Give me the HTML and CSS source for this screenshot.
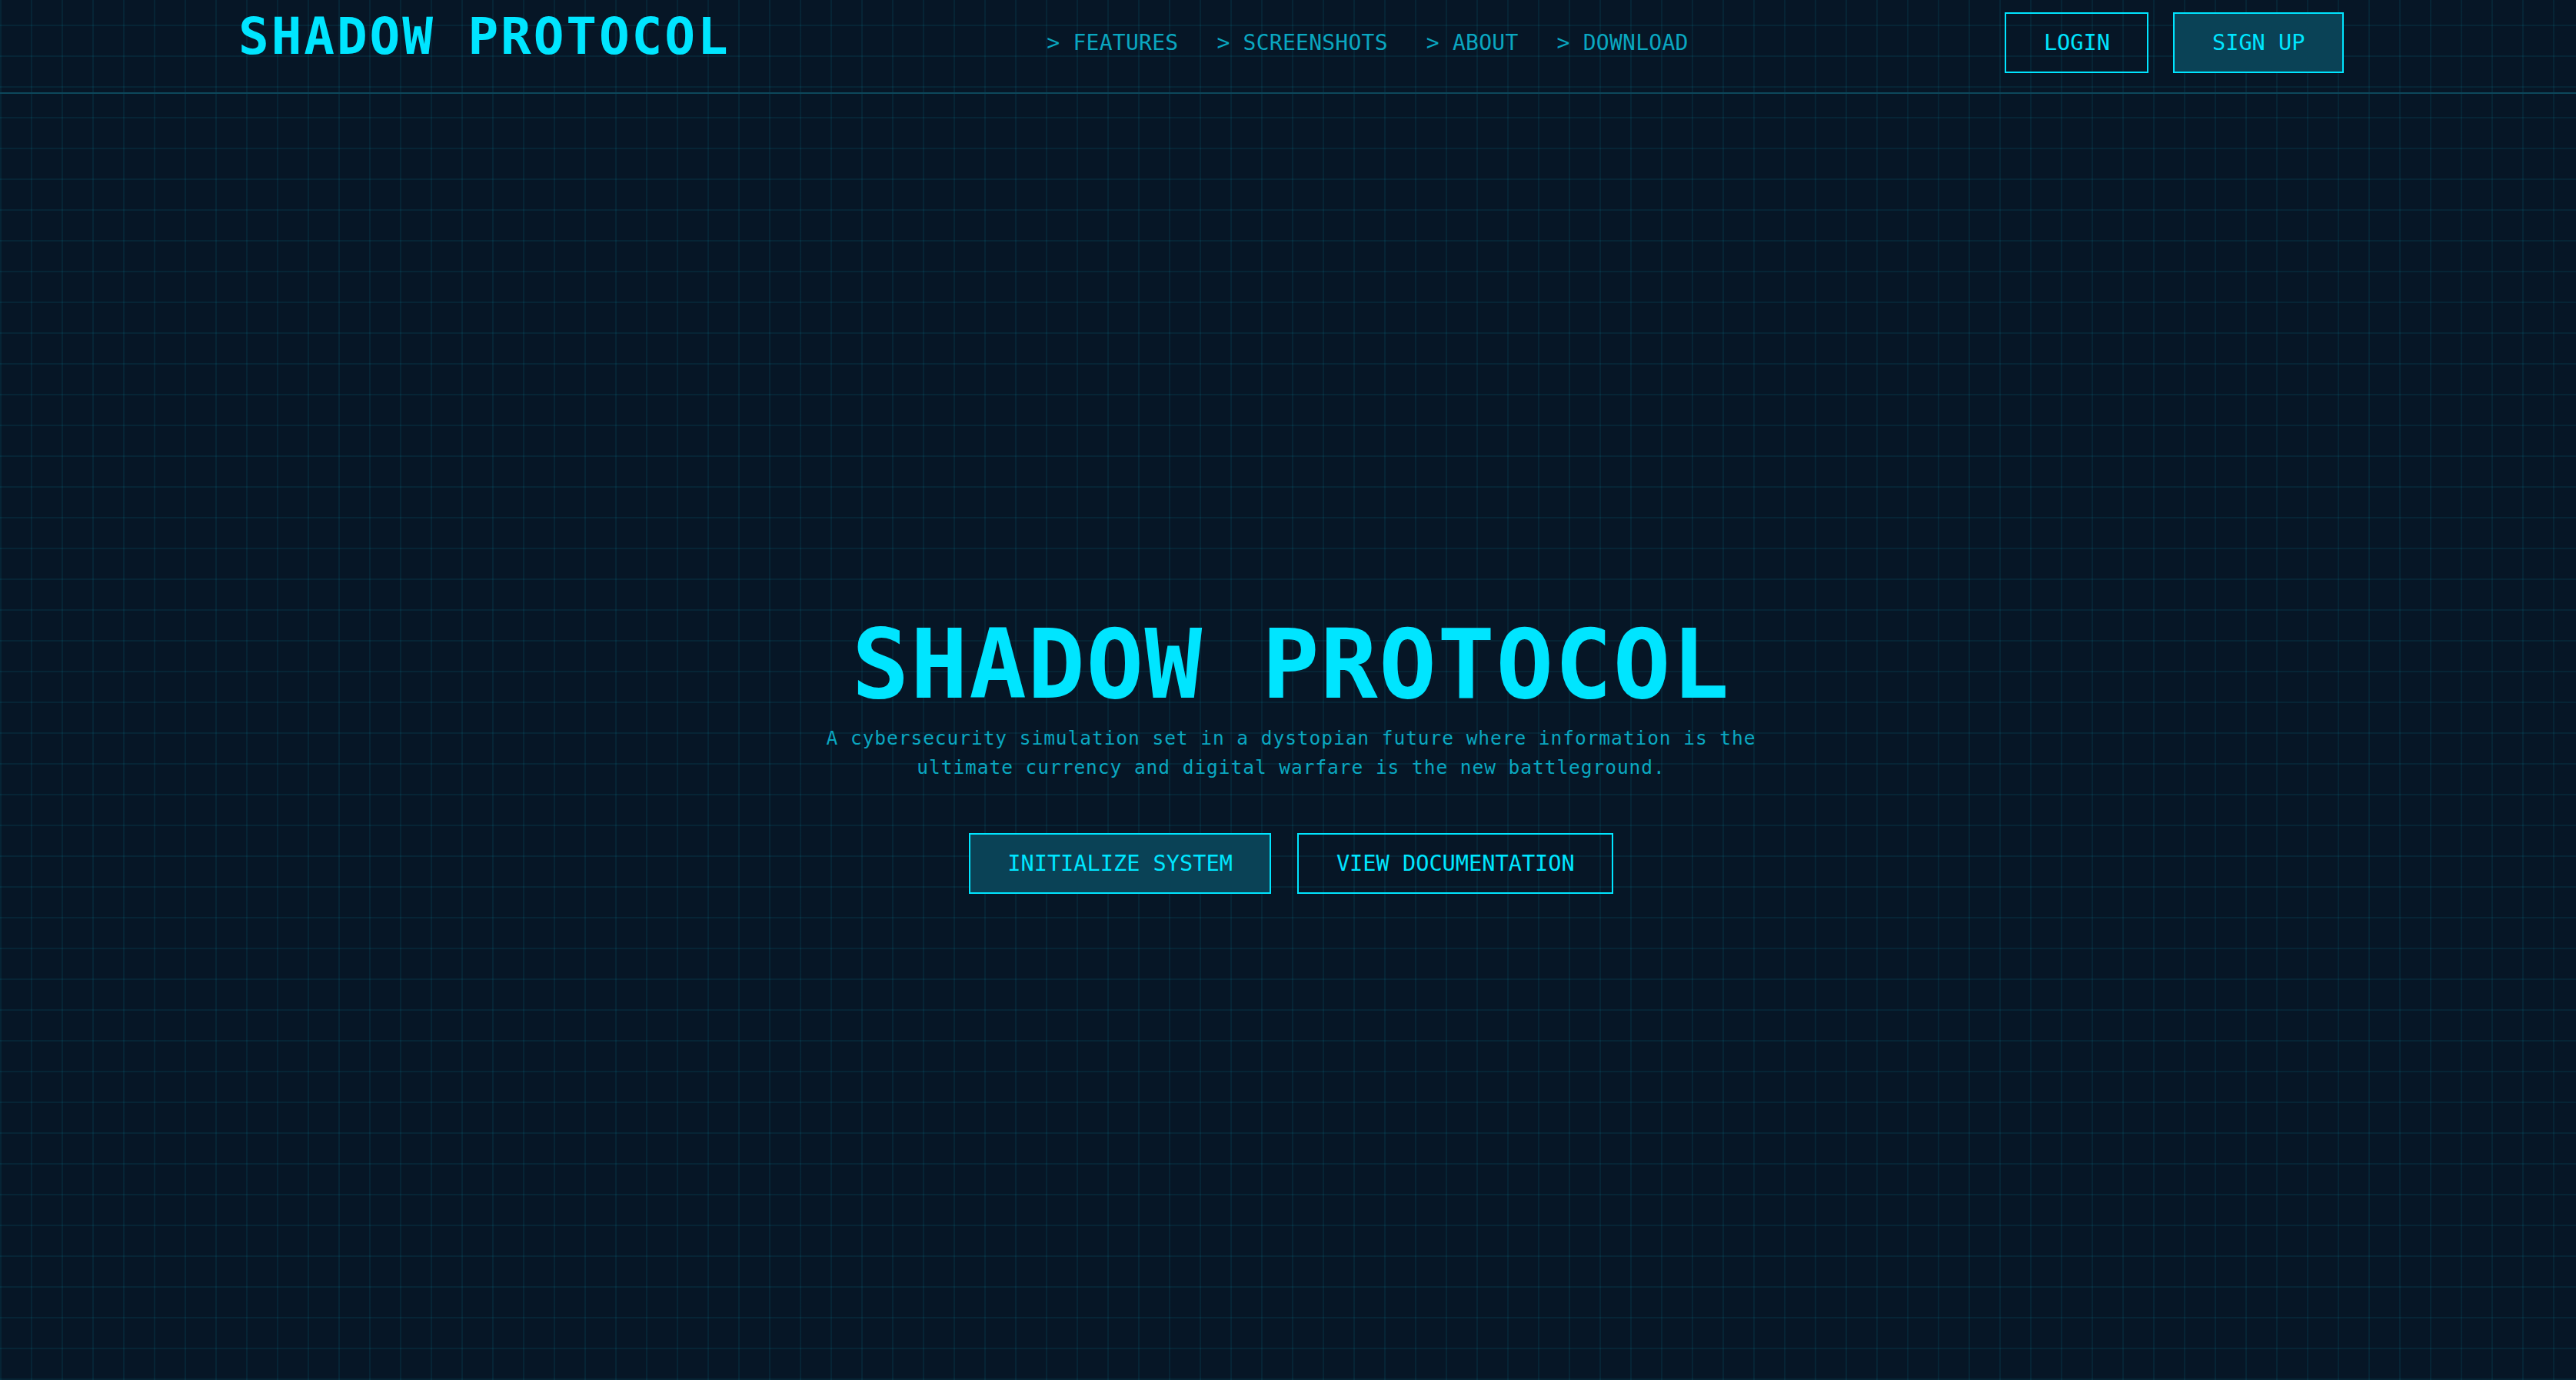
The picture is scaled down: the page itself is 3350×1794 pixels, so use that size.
FILE: index.html
```html
<!DOCTYPE html>
<html lang="en">
<head>
<meta charset="utf-8">
<title>Shadow Protocol</title>
<link rel="stylesheet" href="styles.css">
</head>
<body>
<header class="site-header">
  <div class="container header-inner">
    <div class="logo">SHADOW PROTOCOL</div>
    <nav class="nav">
      <a class="nav-link" href="#features">&gt; FEATURES</a>
      <a class="nav-link" href="#screenshots">&gt; SCREENSHOTS</a>
      <a class="nav-link" href="#about">&gt; ABOUT</a>
      <a class="nav-link" href="#download">&gt; DOWNLOAD</a>
    </nav>
    <div class="auth">
      <a class="btn btn-outline" href="#login">LOGIN</a>
      <a class="btn btn-fill" href="#signup">SIGN UP</a>
    </div>
  </div>
</header>
<main class="container hero">
  <h1 class="hero-title">SHADOW PROTOCOL</h1>
  <p class="hero-text">A cybersecurity simulation set in a dystopian future where information is the ultimate currency and digital warfare is the new battleground.</p>
  <div class="hero-actions">
    <a class="btn hero-btn btn-fill" href="#init">INITIALIZE SYSTEM</a>
    <a class="btn hero-btn btn-outline" href="#docs">VIEW DOCUMENTATION</a>
  </div>
</main>
</body>
</html>
```
FILE: styles.css
```css
html {
  background-color: #061626;
}
body {
  margin: 0;
  min-height: 100vh;
  font-family: "DejaVu Sans Mono", "Liberation Mono", monospace;
  color: #00e5ff;
  background-color: #061626;
  background-image:
    linear-gradient(to right, rgba(0, 229, 255, 0.07) 2px, transparent 2px),
    linear-gradient(to bottom, rgba(0, 229, 255, 0.07) 2px, transparent 2px);
  background-size: 40px 40px, 40px 40px;
  background-position: 0 0, 0 32px;
}
a {
  text-decoration: none;
  color: inherit;
}
.container {
  width: 2738px;
  margin-left: 310px;
  box-sizing: border-box;
}
.site-header {
  border-bottom: 2px solid #0c475b;
}
.header-inner {
  display: flex;
  justify-content: space-between;
  align-items: center;
  padding: 16px 0 25px;
}
.logo {
  font-size: 66px;
  font-weight: bold;
  letter-spacing: 2.9px;
  line-height: 60px;
  color: #00e5ff;
  margin-bottom: 15px;
}
.nav {
  display: flex;
  gap: 50px;
}
.nav-link {
  font-size: 28px;
  letter-spacing: 0.25px;
  line-height: 34px;
  color: #0aa7c0;
}
.auth {
  display: flex;
  gap: 32px;
}
.btn {
  display: block;
  font-size: 28.6px;
  line-height: 35px;
  padding: 20px 48.5px;
  border: 2px solid #00e5ff;
  color: #00e5ff;
  white-space: nowrap;
}
.btn-outline {
  background: transparent;
}
.btn-fill {
  background: #0a4256;
}
.hero {
  padding-top: 668px;
  text-align: center;
}
.hero-title {
  margin: 0 0 2px;
  font-size: 124px;
  font-weight: bold;
  letter-spacing: 1.5px;
  line-height: 1.2;
  color: #00e5ff;
}
.hero-text {
  max-width: 1282px;
  margin: 0 auto 65px;
  font-size: 24.5px;
  letter-spacing: 0.95px;
  line-height: 38.5px;
  color: #0aa7c0;
}
.hero-actions {
  display: flex;
  justify-content: center;
  gap: 34px;
}
.hero-btn {
  padding: 20px 48.5px;
}
```
